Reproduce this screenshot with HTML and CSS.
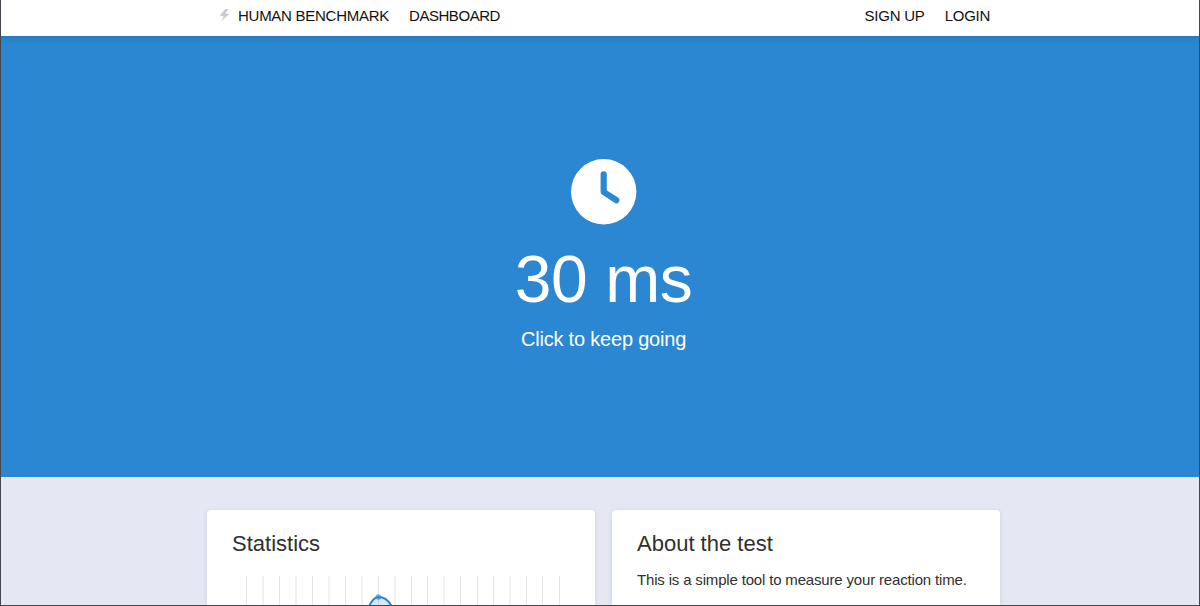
FILE: index.html
```html
<!DOCTYPE html>
<html lang="en">

<head>
    <meta charset="utf-8">
    <title>Human Benchmark - Reaction Time Test</title>
    <link rel="stylesheet" href="styles.css">
</head>

<body>

    <nav class="navbar">
        <div class="nav-inner">
            <a class="brand" href="#">
                <svg class="bolt" viewBox="0 0 10 12">
                    <path d="M6 0 L0 6.6 L4.2 7.2 L1.9 12 L10 4.9 L6 4.4 L8.8 0 Z" />
                </svg>
                <span>HUMAN BENCHMARK</span>
            </a>
            <a class="dashboard" href="#">DASHBOARD</a>
            <a class="signup" href="#">SIGN UP</a>
            <a class="login" href="#">LOGIN</a>
        </div>
    </nav>

    <div class="test">
        <svg class="clock" viewBox="0 0 66 66">
            <circle cx="32.7" cy="32.8" r="32.7" />
            <path d="M32.7 15.3 V33 L45.3 41.2" />
        </svg>
        <h1>30 ms</h1>
        <h2>Click to keep going</h2>
    </div>

    <div class="cards">
        <div class="card">
            <h3>Statistics</h3>
            <svg class="chart" viewBox="0 0 339 29">
                <path class="grid" d="M14.5 0V29 M31 0V29 M47.5 0V29 M64 0V29 M80.5 0V29 M97 0V29 M113.5 0V29 M130 0V29 M146.5 0V29 M163 0V29 M179.5 0V29 M195.5 0V29 M212 0V29 M228.5 0V29 M245.5 0V29 M261.5 0V29 M278 0V29 M294.5 0V29 M310.5 0V29 M327.5 0V29" />
                <path class="curve" d="M113 180 C122 110 130 58 137 31 C139 25 143 21 146.5 21 C151 21 156 24 159 29 C166 43 172 120 196 180" />
                <circle class="point" cx="146.3" cy="21" r="2.5" />
            </svg>
        </div>
        <div class="card">
            <h3>About the test</h3>
            <p>This is a simple tool to measure your reaction time.</p>
        </div>
    </div>

</body>

</html>
```
FILE: styles.css
```css
* {
    box-sizing: border-box;
}

body {
    height: 606px;
    margin: 0;
    font-family: "Liberation Sans", Arial, sans-serif;
    color: #303030;
    background: #e5e8f3;
    border: 1px solid #45474f;
    border-top: 0;
}

.navbar {
    position: relative;
    height: 36px;
    background: #fff;
    box-shadow: 0 0 8px rgba(0, 0, 0, 0.2);
}

.nav-inner {
    display: flex;
    width: 772px;
    margin-left: 217px;
    font-size: 15px;
    line-height: 31px;
    letter-spacing: -0.27px;
}

.nav-inner a {
    color: #111;
    text-decoration: none;
    white-space: nowrap;
}

.brand {
    display: flex;
    width: 191px;
}

.bolt {
    width: 11px;
    height: 12px;
    margin: 9px 8px 0 1px;
    fill: #ccc;
}

.dashboard {
    letter-spacing: -0.45px;
}

.signup {
    margin-left: auto;
    margin-right: 20px;
    letter-spacing: -0.2px;
}

.test {
    display: flex;
    flex-direction: column;
    align-items: center;
    height: 441px;
    padding: 123px 0 0 7px;
    color: #fff;
    background: #2b87d1;
}

.clock {
    width: 66px;
    height: 66px;
    fill: #fff;
}

.clock path {
    fill: none;
    stroke: #2b87d1;
    stroke-width: 6.2;
    stroke-linecap: round;
    stroke-linejoin: round;
}

h1 {
    margin: 16px 0 0;
    font-size: 66px;
    font-weight: normal;
    line-height: 76px;
    letter-spacing: -0.4px;
}

h2 {
    margin: 10px 0 0;
    font-size: 20px;
    font-weight: normal;
    line-height: 24px;
    letter-spacing: -0.2px;
}

.cards {
    display: grid;
    grid-template-columns: 388px 388px;
    gap: 17px;
    height: 128px;
    padding: 33px 0 0 206px;
    overflow: hidden;
}

.card {
    height: 95px;
    padding: 20px 25px 0;
    background: #fff;
    border-radius: 4px 4px 0 0;
    box-shadow: 0 1px 4px rgba(60, 70, 110, 0.15);
}

h3 {
    margin: 0;
    font-size: 22px;
    font-weight: normal;
    line-height: 27px;
}

.chart {
    display: block;
    width: 339px;
    height: 29px;
    margin-top: 19px;
}

.grid {
    stroke: #e4e4e4;
}

.curve {
    fill: rgba(43, 135, 209, 0.2);
    stroke: #2b87d1;
    stroke-width: 2;
}

.point {
    fill: rgba(43, 135, 209, 0.6);
    stroke: rgba(43, 135, 209, 0.4);
}

p {
    margin: 13px 0 0;
    font-size: 15px;
    line-height: 19px;
    letter-spacing: -0.17px;
    white-space: nowrap;
}
```
